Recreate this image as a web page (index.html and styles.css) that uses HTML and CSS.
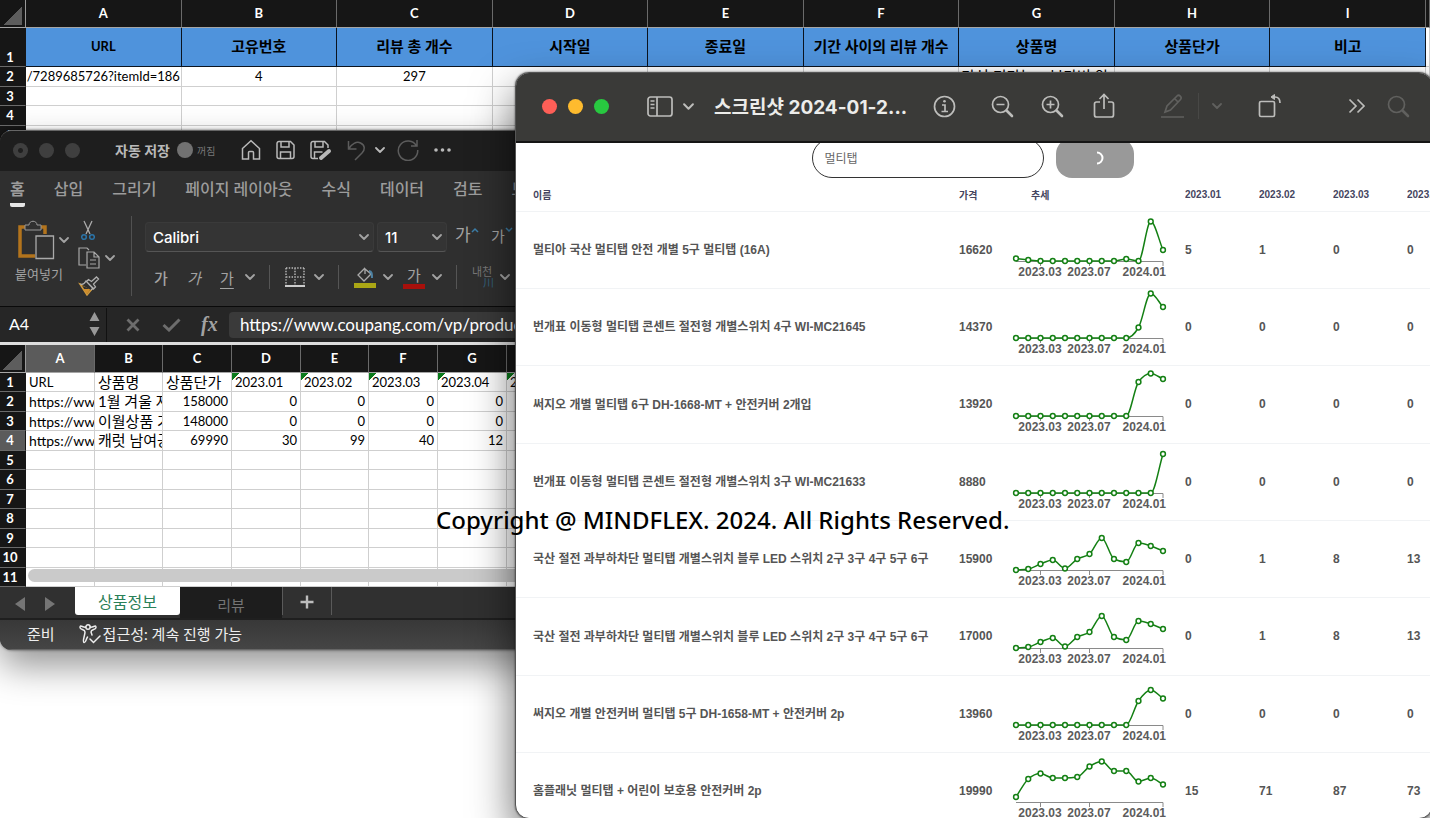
FILE: index.html
```html
<!DOCTYPE html>
<html lang="ko">
<head>
<meta charset="utf-8">
<title>리뷰 분석</title>
<link rel="stylesheet" href="styles.css">
</head>
<body>
<svg class="defs" aria-hidden="true">
  <symbol id="chev" viewBox="0 0 10 10"><path d="M1 3l4 4 4-4" fill="none" stroke="currentColor" stroke-width="1.8" stroke-linecap="round" stroke-linejoin="round"/></symbol>
</svg>
<main class="desktop">

  <table class="sheet sheet-back">
    <colgroup><col class="c-row"><col><col><col><col><col><col><col><col><col><col class="c-rest"></colgroup>
    <thead><tr><th class="corner"></th><th>A</th><th>B</th><th>C</th><th>D</th><th>E</th><th>F</th><th>G</th><th>H</th><th>I</th><th></th></tr></thead>
    <tbody>
      <tr class="titles"><th>1</th><td>URL</td><td>고유번호</td><td>리뷰 총 개수</td><td>시작일</td><td>종료일</td><td>기간 사이의 리뷰 개수</td><td>상품명</td><td>상품단가</td><td>비고</td><td class="blank"></td></tr>
      <tr><th>2</th><td class="url"><span>/7289685726?itemId=186</span></td><td>4</td><td>297</td><td></td><td></td><td></td><td class="clip">탄성 티타늄 &nbsp;&nbsp; 부가벼 양</td><td></td><td></td><td></td></tr>
      <tr><th>3</th><td></td><td></td><td></td><td></td><td></td><td></td><td></td><td></td><td></td><td></td></tr>
      <tr><th>4</th><td></td><td></td><td></td><td></td><td></td><td></td><td></td><td></td><td></td><td></td></tr>
      <tr><th>5</th><td></td><td></td><td></td><td></td><td></td><td></td><td></td><td></td><td></td><td></td></tr>
    </tbody>
  </table>

  <section class="excel">
    <header class="ex-title">
      <div class="lights off"><i class="dot"></i><i></i><i></i></div>
      <label class="auto" for="autosave">자동 저장</label>
      <input type="checkbox" id="autosave" class="toggle">
      <span class="state">꺼짐</span>
      <button aria-label="홈"><svg width="20" height="22" viewBox="0 0 20 22"><path d="M1.5 9.5L10 1.8l8.500 7.700V20H12.500v-6.500a1 1 0 0 0-1-1h-3a1 1 0 0 0-1 1V20h-6z"/></svg></button>
      <button aria-label="저장"><svg width="19" height="20" viewBox="0 0 19 20"><path d="M3 1.500h11.500L18 5v11.500a2 2 0 0 1-2 2H3a2 2 0 0 1-2-2v-13a2 2 0 0 1 2-2zM5 1.500V7h8V1.500M4.500 18.500V12h10v6.500"/></svg></button>
      <button aria-label="다른 이름으로 저장"><svg width="22" height="21" viewBox="0 0 22 21"><path d="M8 18.500H3a2 2 0 0 1-2-2v-13a2 2 0 0 1 2-2h11.500L18 5v3M5 1.500V7h8V1.500M4.500 18.500V12h8"/><path d="M11 18l8-7" stroke-width="4" stroke-linecap="round"/></svg></button>
      <button aria-label="실행 취소" class="dim"><svg width="19" height="21" viewBox="0 0 19 21"><path d="M1.500 1v8h8M1.500 9c3-5 8-8 12-6 5 2.500 4.500 7 1.500 10l-7 7"/></svg></button>
      <button aria-label="실행 취소 목록"><svg width="10" height="10"><use href="#chev"/></svg></button>
      <button aria-label="다시 실행" class="dim"><svg width="22" height="22" viewBox="0 0 22 22"><path d="M20 1v6h-6M19.500 7A9.700 9.700 0 1 0 20.700 11"/></svg></button>
      <button aria-label="더 보기"><svg width="18" height="6" viewBox="0 0 18 6"><g fill="currentColor" stroke="none"><circle cx="2" cy="3" r="1.800"/><circle cx="8.500" cy="3" r="1.800"/><circle cx="15" cy="3" r="1.800"/></g></svg></button>
    </header>
    <nav class="tabs">
      <button class="on">홈</button><button>삽입</button><button>그리기</button><button>페이지 레이아웃</button><button>수식</button><button>데이터</button><button>검토</button><button>보기</button>
    </nav>
    <div class="ribbon">
      <div class="paste">
        <button class="paste-btn"><svg width="38" height="40" viewBox="0 0 38 40"><path d="M8 7H3v29h15M24 7h4v7" fill="none" stroke="#b3741d" stroke-width="3.500"/><path d="M8 10V5h4c0-5 8-5 8 0h4v5z" fill="#303030" stroke="#999"/><path d="M19 16h17.500v22.500H19z" fill="#303030" stroke="#aaa" stroke-width="1.300"/></svg></button>
        <button aria-label="붙여넣기 옵션"><svg width="10" height="10"><use href="#chev"/></svg></button>
        <span>붙여넣기</span>
      </div>
      <div class="clipboard">
        <button aria-label="잘라내기" class="cut"><svg width="14" height="21" viewBox="0 0 14 21"><path d="M3 1l6 13M11 1L5 14" fill="none" stroke="#aaa" stroke-width="1.300"/><g fill="none" stroke="#2b74a8" stroke-width="1.500"><circle cx="3" cy="17" r="2.300"/><circle cx="11" cy="17" r="2.300"/></g></svg></button>
        <button aria-label="복사"><svg width="22" height="22" viewBox="0 0 22 22"><path d="M8 18H1V1h8l2 2M9 5h7l5 5v11H9zM16 5v5h5M12 13h6M12 17h6" fill="none" stroke="#a8a8a8" stroke-width="1.200"/></svg></button>
        <button aria-label="복사 옵션"><svg width="10" height="10"><use href="#chev"/></svg></button>
        <button aria-label="서식 복사" class="brush"><svg width="22" height="20" viewBox="0 0 22 20"><path d="M2 8l7 11 5-6z" fill="#2f2f2f" stroke="#d09a3e" stroke-width="1.500"/><path d="M5 13h8l-4 5z" fill="#d08e2c"/><path d="M2 8c3 1 5-1 6-3l7 7-2 2M8.500 5.500l2-2 3 2 5-4.500 2 2-5 5 2 3-2 2z" fill="#2f2f2f" stroke="#b0b0b0" stroke-width="1.300"/></svg></button>
      </div>
      <div class="font-group">
        <div class="font-row">
          <span class="pick family"><select aria-label="글꼴"><option>Calibri</option></select><svg width="10" height="10"><use href="#chev"/></svg></span>
          <span class="pick size"><select aria-label="글꼴 크기"><option>11</option></select><svg width="10" height="10"><use href="#chev"/></svg></span>
          <button class="grow big">가<svg width="8" height="6" viewBox="0 0 8 6"><path d="M1 5l3-3 3 3"/></svg></button>
          <button class="grow">가<svg width="8" height="6" viewBox="0 0 8 6"><path d="M1 1l3 3 3-3"/></svg></button>
        </div>
        <div class="style-row">
          <button class="b">가</button><button class="i">가</button><button class="u">가</button>
          <button aria-label="밑줄 옵션"><svg width="10" height="10"><use href="#chev"/></svg></button>
          <hr>
          <button aria-label="테두리"><svg width="20" height="20" viewBox="0 0 20 20"><path d="M1 1h18M1 10h18M1 1v17M10 1v17M19 1v17" fill="none" stroke="#bbb" stroke-width="1.400" stroke-dasharray="1.400 1.400"/><path d="M0 19h20" stroke="#ccc" stroke-width="2"/></svg></button>
          <button aria-label="테두리 옵션"><svg width="10" height="10"><use href="#chev"/></svg></button>
          <hr>
          <button aria-label="채우기 색"><svg width="22" height="22" viewBox="0 0 22 22"><path d="M11 2L4 9l6 6 7-7-6-5v5" fill="none" stroke="#aaa" stroke-width="1.300"/><path d="M15 5c3 0 3 3 3 7" fill="none" stroke="#4d82a3" stroke-width="2"/><path d="M0 17h22v5H0z" fill="#aaa615"/></svg></button>
          <button aria-label="채우기 옵션"><svg width="10" height="10"><use href="#chev"/></svg></button>
          <button class="color">가</button>
          <button aria-label="글꼴 색 옵션"><svg width="10" height="10"><use href="#chev"/></svg></button>
          <hr>
          <button class="ruby">내천<span>川</span></button>
          <button aria-label="윗주 옵션"><svg width="10" height="10"><use href="#chev"/></svg></button>
        </div>
      </div>
    </div>
    <div class="formula">
      <div class="name-box"><span>A4</span><svg width="11" height="24" viewBox="0 0 11 24"><path d="M0.500 9L5.500 0l5 9zM0.500 15l5 9 5-9z" fill="#999"/></svg></div>
      <button aria-label="취소"><svg width="14" height="14" viewBox="0 0 14 14"><path d="M1.500 1.500l11 11M12.500 1.500l-11 11" stroke="#6d6d6d" stroke-width="2.800"/></svg></button>
      <button aria-label="입력"><svg width="19" height="14" viewBox="0 0 19 14"><path d="M1.500 7l5.500 5L17.500 1.500" fill="none" stroke="#6d6d6d" stroke-width="3"/></svg></button>
      <button class="fx">fx</button>
      <input aria-label="수식" value="https://www.coupang.com/vp/products/7289685726">
    </div>
    <div class="sheet-wrap">
      <table class="sheet sheet-front">
        <colgroup><col class="c-row"><col class="w69"><col class="w68"><col class="w69"><col class="w69"><col class="w68"><col class="w69"><col class="w69"><col></colgroup>
        <thead><tr><th class="corner"></th><th class="sel">A</th><th>B</th><th>C</th><th>D</th><th>E</th><th>F</th><th>G</th><th>H</th></tr></thead>
        <tbody>
          <tr><th>1</th><td>URL</td><td>상품명</td><td>상품단가</td><td class="flag">2023.01</td><td class="flag">2023.02</td><td class="flag">2023.03</td><td class="flag">2023.04</td><td class="flag">2023.05</td></tr>
          <tr><th>2</th><td class="link">https://www.</td><td>1월 겨울 자켓</td><td class="n">158000</td><td class="n">0</td><td class="n">0</td><td class="n">0</td><td class="n">0</td><td class="n">0</td></tr>
          <tr><th>3</th><td class="link">https://www.</td><td>이월상품 기모</td><td class="n">148000</td><td class="n">0</td><td class="n">0</td><td class="n">0</td><td class="n">0</td><td class="n">0</td></tr>
          <tr><th class="sel">4</th><td class="link">https://www.</td><td>캐럿 남여공용</td><td class="n">69990</td><td class="n">30</td><td class="n">99</td><td class="n">40</td><td class="n">12</td><td class="n">0</td></tr>
          <tr><th>5</th><td></td><td></td><td></td><td></td><td></td><td></td><td></td><td></td></tr>
          <tr><th>6</th><td></td><td></td><td></td><td></td><td></td><td></td><td></td><td></td></tr>
          <tr><th>7</th><td></td><td></td><td></td><td></td><td></td><td></td><td></td><td></td></tr>
          <tr><th>8</th><td></td><td></td><td></td><td></td><td></td><td></td><td></td><td></td></tr>
          <tr><th>9</th><td></td><td></td><td></td><td></td><td></td><td></td><td></td><td></td></tr>
          <tr><th>10</th><td></td><td></td><td></td><td></td><td></td><td></td><td></td><td></td></tr>
          <tr><th>11</th><td></td><td></td><td></td><td></td><td></td><td></td><td></td><td></td></tr>
        </tbody>
      </table>
      <div class="scroll"></div>
    </div>
    <div class="sheet-tabs">
      <button aria-label="이전 시트" class="arrow"><svg width="10" height="14"><path d="M10 0v14L0 7z" fill="#757575"/></svg></button>
      <button aria-label="다음 시트" class="arrow"><svg width="10" height="14"><path d="M0 0v14l10-7z" fill="#757575"/></svg></button>
      <button class="tab active">상품정보</button>
      <button class="tab">리뷰</button>
      <button class="add" aria-label="시트 추가"><svg width="14" height="14"><path d="M7 0.500v13M0.500 7h13" stroke="#bdbdbd" stroke-width="2.400"/></svg></button>
    </div>
    <footer class="status">
      <span>준비</span>
      <span class="a11y"><svg width="22" height="20" viewBox="0 0 22 20"><path d="M7 3C4 4 1 0 1 3.500 1 6 6 5 6 8c0 3-3 10-1 10.500C7 19 7 15 8.500 13M11 3c3 1 6-3 6 0.500C17 6 12 5 12 8l1 3M11 15l3.500 3.500L21 12" fill="none" stroke="#eee" stroke-width="1.500" stroke-linecap="round"/><circle cx="9" cy="3" r="2.200" fill="none" stroke="#eee" stroke-width="1.400"/></svg>접근성: 계속 진행 가능</span>
    </footer>
  </section>

  <section class="preview">
    <header class="pv-bar">
      <div class="lights"><i class="red"></i><i class="yellow"></i><i class="green"></i></div>
      <button aria-label="사이드바"><svg width="26" height="21" viewBox="0 0 26 21"><rect x="1" y="1" width="24" height="19" rx="2.500"/><path d="M10 1v19M3.500 5h4M3.500 8.500h4M3.500 12h4"/></svg></button>
      <button aria-label="보기 옵션"><svg width="11" height="11"><use href="#chev"/></svg></button>
      <h1>스크린샷 2024-01-2...</h1>
      <button aria-label="정보"><svg width="23" height="23" viewBox="0 0 23 23"><circle cx="11.500" cy="11.500" r="10"/><path d="M9 10h3v6.500M8.500 16.500h6.500"/><circle cx="11.500" cy="6.300" r="1.300" fill="currentColor" stroke="none"/></svg></button>
      <button aria-label="축소"><svg width="23" height="23" viewBox="0 0 23 23"><circle cx="9.500" cy="9.500" r="8"/><path d="M5.500 9.500h8"/><path d="M15.500 15.500l5.500 5.500" stroke-width="2.600" stroke-linecap="round"/></svg></button>
      <button aria-label="확대"><svg width="23" height="23" viewBox="0 0 23 23"><circle cx="9.500" cy="9.500" r="8"/><path d="M5.500 9.500h8M9.500 5.500v8"/><path d="M15.500 15.500l5.500 5.500" stroke-width="2.600" stroke-linecap="round"/></svg></button>
      <button aria-label="공유"><svg width="22" height="26" viewBox="0 0 22 26"><path d="M7 9H3.500a2 2 0 0 0-2 2v11a2 2 0 0 0 2 2h15a2 2 0 0 0 2-2V11a2 2 0 0 0-2-2H15M11 16V1.500M6.500 6L11 1.500 15.500 6"/></svg></button>
      <button aria-label="마크업" class="dim"><svg width="23" height="24" viewBox="0 0 23 24"><path d="M4 18l2-6L16 2c2-2 5.500 1 3.500 3.500L9.500 16zM13.500 4.500l3.500 3.500M0 23h23"/></svg></button>
      <hr>
      <button aria-label="마크업 옵션" class="dim"><svg width="10" height="10"><use href="#chev"/></svg></button>
      <button aria-label="회전"><svg width="24" height="24" viewBox="0 0 24 24"><rect x="1.500" y="7.500" width="15" height="15" rx="1.500"/><path d="M15 3h2c3.500 0 5 2 5 6"/><path d="M16.500 0.500v5L13 3z" fill="currentColor" stroke-width="1"/></svg></button>
      <button aria-label="더 보기"><svg width="18" height="16" viewBox="0 0 18 16"><path d="M1.500 1.500L8 8l-6.500 6.500M9.500 1.500L16 8l-6.500 6.500"/></svg></button>
      <button aria-label="검색" class="dim"><svg width="23" height="23" viewBox="0 0 23 23"><circle cx="9.500" cy="9.500" r="8"/><path d="M15.500 15.500l5.500 5.500" stroke-width="2.600" stroke-linecap="round"/></svg></button>
    </header>
    <div class="pv-body">
      <form class="search">
        <input aria-label="검색어" value="멀티탭">
        <button type="button" aria-label="검색 중"><svg width="14" height="14" viewBox="0 0 14 14"><path d="M7 1.500a5.500 5.500 0 0 1 0 11" fill="none" stroke="#fff" stroke-width="2"/></svg></button>
      </form>
      <table class="items">
        <colgroup><col><col class="w-price"><col class="w-trend"><col class="w-month"><col class="w-month"><col class="w-month"><col class="w-last"></colgroup>
        <thead><tr><th>이름</th><th>가격</th><th class="trend">추세</th><th>2023.01</th><th>2023.02</th><th>2023.03</th><th>2023.04</th></tr></thead>
        <tbody>
          <tr><td>멀티아 국산 멀티탭 안전 개별 5구 멀티탭 (16A)</td><td>16620</td><td data-trend="2.5,1,0,0,0,0,0,0,0,2,0,39.5,11"></td><td>5</td><td>1</td><td>0</td><td>0</td></tr>
          <tr><td>번개표 이동형 멀티탭 콘센트 절전형 개별스위치 4구 WI-MC21645</td><td>14370</td><td data-trend="0,0,0,0,0,0,0,0,0,0,10.5,44.5,31"></td><td>0</td><td>0</td><td>0</td><td>0</td></tr>
          <tr><td>써지오 개별 멀티탭 6구 DH-1668-MT + 안전커버 2개입</td><td>13920</td><td data-trend="0,0,0,0,0,0,0,0,0,0,34,42.5,37"></td><td>0</td><td>0</td><td>0</td><td>0</td></tr>
          <tr><td>번개표 이동형 멀티탭 콘센트 절전형 개별스위치 3구 WI-MC21633</td><td>8880</td><td data-trend="0,0,0,0,0,0,0,0,0,0,0,0,39"></td><td>0</td><td>0</td><td>0</td><td>0</td></tr>
          <tr><td>국산 절전 과부하차단 멀티탭 개별스위치 블루 LED 스위치 2구 3구 4구 5구 6구</td><td>15900</td><td data-trend="0,1,6,10,1.5,11,16,32,11,8,27,24,19"></td><td>0</td><td>1</td><td>8</td><td>13</td></tr>
          <tr><td>국산 절전 과부하차단 멀티탭 개별스위치 블루 LED 스위치 2구 3구 4구 5구 6구</td><td>17000</td><td data-trend="0,1,6,10,1.5,11,16,32,11,8,27,24,19"></td><td>0</td><td>1</td><td>8</td><td>13</td></tr>
          <tr><td>써지오 개별 안전커버 멀티탭 5구 DH-1658-MT + 안전커버 2p</td><td>13960</td><td data-trend="0,0,0,0,0,0,0,0,0,0,24,35,26.5"></td><td>0</td><td>0</td><td>0</td><td>0</td></tr>
          <tr><td>홈플래닛 멀티탭 + 어린이 보호용 안전커버 2p</td><td>19990</td><td data-trend="5,23,28.5,24,24,25,35.5,40.5,31,31,20.5,24,17.5"></td><td>15</td><td>71</td><td>87</td><td>73</td></tr>
        </tbody>
      </table>
    </div>
  </section>

  <p class="copyright">Copyright @ MINDFLEX. 2024. All Rights Reserved.</p>
</main>
<script src="charts.js"></script>
</body>
</html>
```
FILE: styles.css
```css
* { box-sizing: border-box; }
body { margin: 0; background: #fff; font-family: "Lato", "Noto Sans CJK KR", sans-serif; }
button { background: none; border: 0; padding: 0; margin: 0; color: inherit; font: inherit; text-align: left; display: block; white-space: nowrap; }
svg { display: block; }
hr { border: 0; margin: 0; }
.defs { position: absolute; width: 0; height: 0; }
.desktop { position: relative; height: 100vh; overflow: hidden; }

/* spreadsheets */
.sheet { border-collapse: separate; border-spacing: 0; table-layout: fixed; font-size: 13px; line-height: 17px; color: #000; }
.sheet th, .sheet td { padding: 0; overflow: hidden; white-space: nowrap; border-right: 1px solid #cfcfcf; border-bottom: 1px solid #cfcfcf; background: #fff; }
.sheet th { background: #161616; color: #fff; font-weight: 700; border-color: #6a6a6a; text-align: center; }
.sheet thead th { height: 28px; border-bottom-color: #a5a5a5; }
.sheet .c-row { width: 26px; }
.sheet tbody th:first-child { border-right-color: #161616; padding-right: 5px; }
.sheet .corner { background: linear-gradient(135deg, transparent 50%, #5d5d5d 50%) 3px 6px / 19px 19px no-repeat #161616; border-right-color: #999; }
.sheet th.sel { background: #5b5b5b; }

.sheet-back { width: 100%; }
.sheet-back .c-rest { width: 4px; }
.sheet-back tbody tr { height: 19px; }
.sheet-back tbody tr:nth-child(even) { height: 20px; }
.sheet-back td { text-align: center; }
.sheet-back tbody tr.titles { height: 39px; }
.titles td { background: #4f93dc; border-color: #0b1420; font-size: 15px; font-weight: 700; line-height: 20px; }
.sheet .titles td { background: #4f93dc; border-color: #0b1420; padding-bottom: 2px; }
.titles td:nth-child(2) { font-size: 13px; }
.sheet .titles .blank { background: #fff; border-color: #cfcfcf; }
.titles th { vertical-align: bottom; }
.sheet-back .url { direction: rtl; }
.url span { direction: ltr; unicode-bidi: embed; }
.sheet-back .clip { text-align: left; padding-left: 2px; font-size: 15px; }

.sheet-front { width: 100%; }
.sheet-front .w69 { width: 69px; }
.sheet-front .w68 { width: 68px; }
.sheet-front tbody tr { height: 19px; }
.sheet-front tbody tr:nth-child(even) { height: 20px; }
.sheet-front td { padding: 0 3px; }
.sheet-front .link { font-size: 14px; padding-right: 0; }
.sheet-front td:nth-child(3), .sheet-front tr:first-child td:nth-child(4) { font-size: 15px; }
.sheet-front .n { text-align: right; }
.sheet-front .flag { background: linear-gradient(135deg, #0b7a1c 50%, transparent 50%) 0 0 / 8px 8px no-repeat #fff; }

/* window buttons */
.lights { display: flex; gap: 11px; }
.lights i { width: 15px; height: 15px; border-radius: 50%; background: #3f3f3f; }
.lights .dot { background: radial-gradient(circle, #1f1f1f 2px, #3f3f3f 3px); }
.lights .red { background: #fe5f57; }
.lights .yellow { background: #febb2e; }
.lights .green { background: #28c840; }

/* spreadsheet window */
.excel { position: absolute; left: 0; top: 130px; width: 45%; border-radius: 12px; overflow: hidden; background: #2f2f2f; color: #ababab; border-top: 1px solid #666; box-shadow: 0 16px 36px rgba(0, 0, 0, .42), 0 0 3px rgba(0, 0, 0, .6); }
.ex-title { display: grid; grid-template-columns: 102px 62px 20px 44px 35px 34px 37px 28px 22px 37px auto; align-items: center; height: 40px; padding: 0 0 2px 13px; background: #1e1e1e; color: #b9b9b9; }
.ex-title button svg { fill: none; stroke: currentColor; stroke-width: 1.5; }
.ex-title .dim { color: #5c5c5c; }
.auto { font-size: 14px; font-weight: 700; white-space: nowrap; }
.toggle { appearance: none; width: 16px; height: 16px; margin: 0; border-radius: 50%; background: #717171; }
.state { font-size: 10px; color: #777; }
.tabs { display: flex; gap: 29px; padding: 6px 10px 0; height: 38px; font-size: 16px; line-height: 24px; font-weight: 500; white-space: nowrap; color: #9c9c9c; }
.tabs button { height: 24px; }
.tabs .on { font-weight: 700; border-bottom: 4px solid #e6e6e6; height: 30px; padding-bottom: 2px; border-radius: 2px; }

.ribbon { display: flex; height: 98px; padding: 7px 0 10px 15px; border-bottom: 1px solid #0a0a0a; color: #a3a3a3; }
.paste { display: grid; grid-template-columns: 44px 19px; grid-template-rows: 48px 20px; align-items: center; font-size: 13px; line-height: 20px; white-space: nowrap; }
.paste-btn { padding-left: 2px; }
.paste span { grid-column: 1 / 3; }
.clipboard { display: grid; grid-template-columns: 27px 26px; grid-template-rows: 28px 28px 28px; align-items: center; border-right: 1px solid #515151; }
.clipboard .cut, .clipboard .brush { grid-column: 1 / 3; }
.clipboard .cut { padding-left: 3px; }
.font-group { padding-left: 13px; }
.font-row { display: flex; gap: 3px; padding-top: 6px; }
.pick { position: relative; }
.pick select { appearance: none; width: 100%; height: 30px; padding: 0 7px; border: 1px solid #3a3a3a; border-bottom-color: #555; border-radius: 4px; background: #343434; color: #fff; font: 500 15px "Inter", sans-serif; }
.pick svg { position: absolute; right: 5px; top: 10px; }
.family { width: 229px; }
.size { width: 70px; }
.grow { display: flex; align-items: flex-start; width: 28px; margin-left: 5px; font-size: 15px; line-height: 28px; }
.grow.big { font-size: 17px; line-height: 26px; }
.grow svg { margin-top: 5px; fill: none; stroke: #3c7ea8; stroke-width: 1.500; }
.style-row { display: grid; grid-template-columns: 33px 33px 25px 24px 16px 29px 24px 16px 29px 20px 29px 24px 16px 28px 20px; align-items: center; padding-left: 9px; height: 50px; font-size: 15px; }
.style-row hr { width: 1px; height: 24px; background: #555; }
.b { font-weight: 500; }
.i { font-style: italic; }
.u { text-decoration: underline; text-underline-offset: 4px; }
.color { width: 22px; line-height: 18px; text-align: center; border-bottom: 5px solid #a8100b; }
.ruby { font-size: 11px; line-height: 11px; color: #777; }
.ruby span { display: block; padding-left: 11px; color: #33607c; }

.formula { display: grid; grid-template-columns: 126px 36px 39px 28px auto; align-items: center; height: 38px; background: #262626; border-bottom: 3px solid #dedede; }
.name-box { display: flex; justify-content: space-between; align-items: center; width: 107px; height: 34px; padding: 0 6px 2px 9px; border-right: 1px solid #111; color: #fff; font-size: 16px; }
.fx { font: italic 700 20px "Liberation Serif", serif; color: #a2a2a2; }
.formula input { width: 100%; height: 26px; border: 0; border-radius: 4px; padding: 0 11px; background: #3a3a3a; color: #fff; font: 17px "Lato", sans-serif; }

.sheet-wrap { position: relative; }
.scroll { position: absolute; left: 28px; right: 0; bottom: 5px; height: 13px; border-radius: 7px; background: #cacaca; }
.sheet-tabs { display: flex; height: 33px; background: #303030; border-bottom: 2px solid #1f1f1f; padding-left: 15px; align-items: flex-start; }
.arrow { width: 30px; padding-top: 10px; }
.tab { width: 102px; height: 31px; background: #1d1d1d; color: #747474; font-size: 15px; line-height: 36px; text-align: center; }
.tab.active { width: 105px; height: 28px; background: #fff; color: #2a8058; font-size: 16px; line-height: 30px; border-radius: 0 0 3px 3px; }
.add { width: 50px; height: 28px; padding: 2px 0 0 17px; border: solid #5a5a5a; border-width: 0 1px; }
.status { display: flex; gap: 24px; align-items: center; height: 30px; padding: 0 0 2px 27px; background: linear-gradient(#383838, #454545); color: #eee; font-size: 15px; border-bottom: 1px solid #666; }
.a11y { display: flex; gap: 2px; align-items: center; }

/* preview window */
.preview { position: absolute; left: 515px; right: -3px; top: 72px; bottom: -1px; border-radius: 14px; overflow: hidden; background: #fff; border: 1px solid #555; box-shadow: 0 20px 44px rgba(0, 0, 0, .6), 0 0 2px rgba(0, 0, 0, .6); }
.pv-bar { display: grid; grid-template-columns: 105px 36px 31px 1fr 58px 50px 52px 68px 37px 14px 46px 90px 39px 40px; align-items: center; height: 70px; padding: 0 5px 2px 26px; background: #3a3a38; border-bottom: 2px solid #151515; color: #bdbdbb; }
.pv-bar svg { fill: none; stroke: currentColor; stroke-width: 1.7; }
.pv-bar .dim { color: #60605e; }
.pv-bar hr { width: 1px; height: 26px; background: #484846; }
.pv-bar h1 { margin: 0; padding-bottom: 2px; font: 700 19px "Inter", "Noto Sans CJK KR", sans-serif; color: #ececea; white-space: nowrap; }
.pv-body { overflow: hidden; font-family: "Liberation Sans", "Noto Sans CJK KR", sans-serif; }
.search { display: flex; justify-content: center; gap: 12px; margin-top: -5px; padding-right: 3px; }
.search input { width: 232px; height: 40px; border: 1px solid #333; border-radius: 20px; padding: 0 12px 2px; background: #fff; color: #666; font: 12px "Noto Sans CJK KR", sans-serif; }
.search button { width: 78px; height: 40px; padding-left: 34px; border-radius: 16px; background: #999; }
.items { width: 100%; table-layout: fixed; border-collapse: separate; border-spacing: 0; font-size: 12px; font-weight: 700; color: #555; white-space: nowrap; }
.items th, .items td { padding: 0 0 1px; text-align: left; overflow: hidden; border-bottom: 1px solid #f1f3f5; }
.items th:first-child, .items td:first-child { padding-left: 17px; }
.items td:first-child { padding-bottom: 3px; }
.items th { height: 34px; padding-bottom: 0; font-size: 10px; color: #454560; }
.items th.trend { padding-left: 21px; }
.items tbody tr { height: 77px; }
.items tbody tr:nth-child(3n) { height: 78px; }
.items td[data-trend] { padding: 0; }
.w-price { width: 51px; }
.w-trend { width: 175px; }
.w-month { width: 74px; }
.w-last { width: 25px; }
.chart text { font: 700 12px "Liberation Sans", sans-serif; fill: #5c5c5c; }
.chart .axis { fill: none; stroke: #8a8a8a; }
.chart .line { fill: none; stroke: #148014; stroke-width: 1.500; }
.chart circle { fill: #fff; stroke: #148014; stroke-width: 1.500; }

.copyright { position: absolute; left: 436px; top: 503px; margin: 0; font: 500 24px/34px "Noto Sans", sans-serif; color: #000; white-space: nowrap; }
```
FILE: charts.js
```javascript
// Draws a small monotone line chart in every cell that carries trend values.
var STEP = 12.25, LEFT = 6, BASE = 49;

function tangents(p) {
  var n = p.length, d = [], m = [], i;
  for (i = 0; i < n - 1; i++) d.push((p[i + 1] - p[i]) / STEP);
  m[0] = d[0];
  m[n - 1] = d[n - 2];
  for (i = 1; i < n - 1; i++) {
    m[i] = d[i - 1] * d[i] <= 0 ? 0
      : Math.sign(d[i]) * Math.min(2 * Math.abs(d[i]), 2 * Math.abs(d[i - 1]), Math.abs(d[i] + d[i - 1]) / 2);
  }
  return m;
}

document.querySelectorAll('[data-trend]').forEach(function (cell) {
  var y = cell.dataset.trend.split(',').map(function (v) { return BASE - Number(v); });
  var m = tangents(y), third = STEP / 3;
  var path = 'M' + LEFT + ' ' + y[0], dots = '';
  y.forEach(function (v, i) {
    var x = LEFT + i * STEP;
    if (i) {
      path += 'C' + [x - STEP + third, y[i - 1] + m[i - 1] * third, x - third, v - m[i] * third, x, v].join(' ');
    }
    dots += '<circle cx="' + x + '" cy="' + v + '" r="2.4"/>';
  });
  cell.innerHTML = '<svg class="chart" width="170" height="76">' +
    '<path class="axis" d="M6 49.5H153V54M30.5 49.5V54M79.5 49.5V54"/>' +
    '<path class="line" d="' + path + '"/>' + dots +
    '<text x="30" y="64" text-anchor="middle">2023.03</text>' +
    '<text x="79" y="64" text-anchor="middle">2023.07</text>' +
    '<text x="156" y="64" text-anchor="end">2024.01</text></svg>';
});
```
